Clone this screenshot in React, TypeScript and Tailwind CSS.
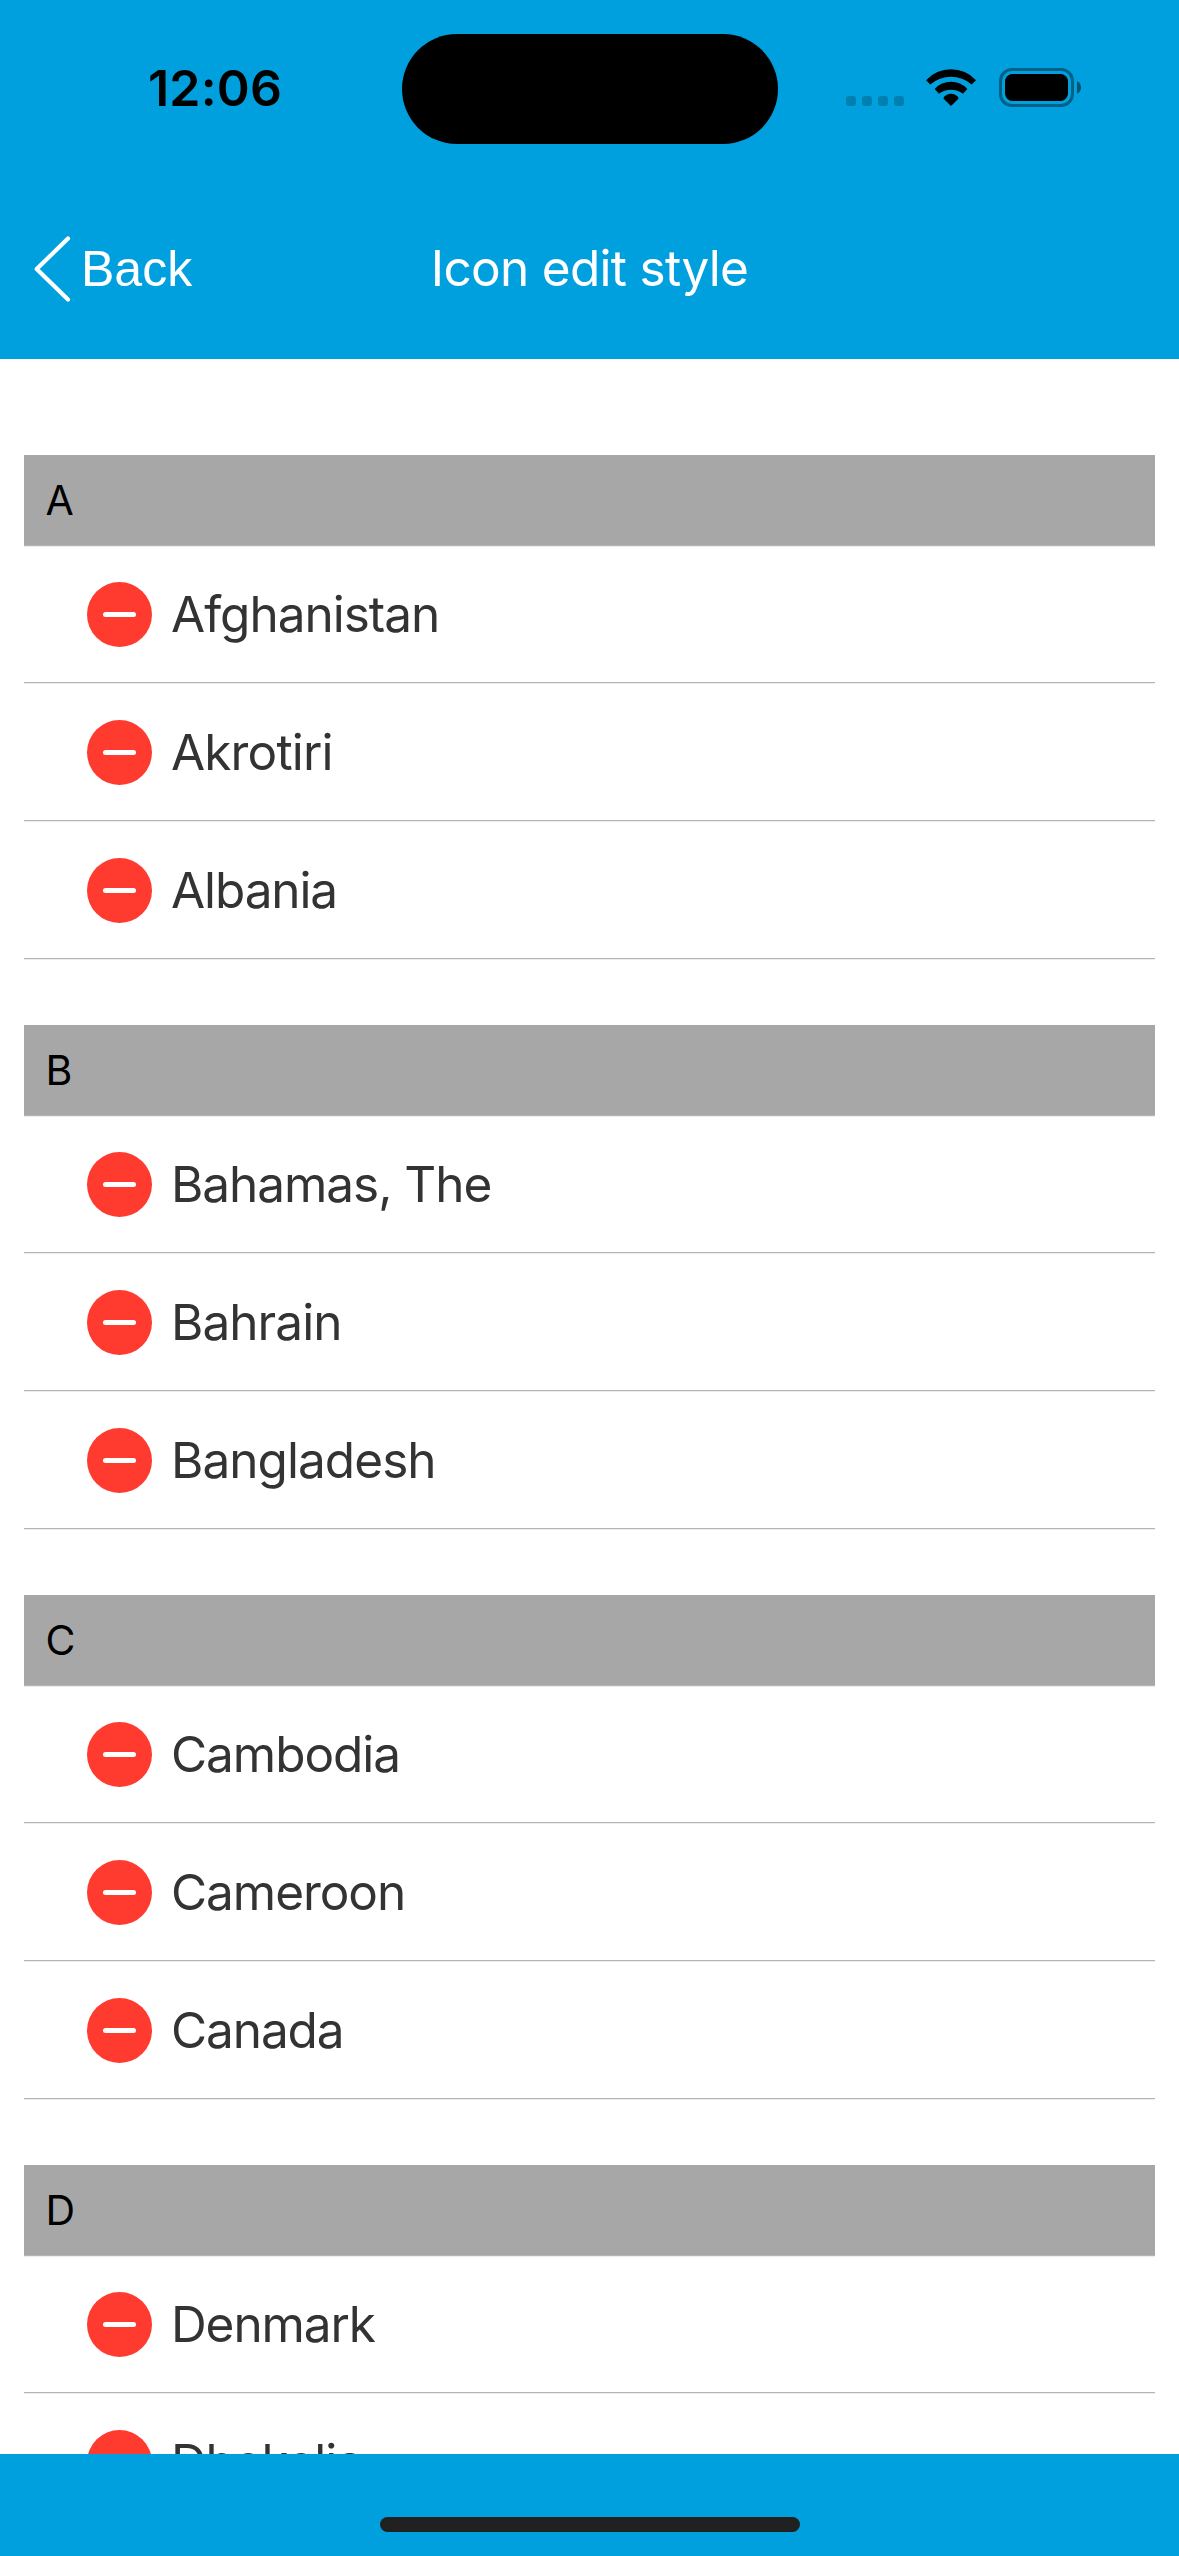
type Country = { name: string; tracking: string };
type Section = { letter: string; countries: Country[] };

const sections: Section[] = [
  {
    letter: "A",
    countries: [
      { name: "Afghanistan", tracking: "tracking-[-1px]" },
      { name: "Akrotiri", tracking: "tracking-[-0.85px]" },
      { name: "Albania", tracking: "tracking-[-1.1px]" },
    ],
  },
  {
    letter: "B",
    countries: [
      { name: "Bahamas, The", tracking: "tracking-[-1.05px]" },
      { name: "Bahrain", tracking: "tracking-[-0.95px]" },
      { name: "Bangladesh", tracking: "tracking-[-0.95px]" },
    ],
  },
  {
    letter: "C",
    countries: [
      { name: "Cambodia", tracking: "tracking-[-1.05px]" },
      { name: "Cameroon", tracking: "tracking-[-1.05px]" },
      { name: "Canada", tracking: "tracking-[-1.1px]" },
    ],
  },
  {
    letter: "D",
    countries: [
      { name: "Denmark", tracking: "tracking-[-1.1px]" },
      { name: "Dhekelia", tracking: "tracking-[-1.1px]" },
    ],
  },
];

function WifiIcon() {
  return (
    <svg className="h-[37px] w-[50px]" viewBox="0 0 150 111" aria-hidden="true">
      <path d="M0 33.5A101.7 101.7 0 0 1 150 33.5L137 46.5A95 95 0 0 0 13 46.5Z" />
      <path d="M26 60A65.6 65.6 0 0 1 124 60L111 74A60 60 0 0 0 39 74Z" />
      <path d="M52 88.5A26 26 0 0 1 98 88.5L75 111Z" />
    </svg>
  );
}

function BatteryIcon() {
  return (
    <svg className="h-[39px] w-[82px]" viewBox="0 0 82 39" aria-hidden="true">
      <rect x="1.5" y="1.5" width="72" height="36" rx="11.5" fill="none" stroke="black" strokeOpacity="0.4" strokeWidth="3" />
      <rect x="6" y="6" width="63" height="27" rx="7.5" />
      <path d="M78 13.3C80.5 14.4 82 16.7 82 19.5C82 22.3 80.5 24.6 78 25.7Z" fillOpacity="0.5" />
    </svg>
  );
}

function StatusBar() {
  return (
    <div className="flex h-[177px] text-black">
      <div className="w-[401.5px] pt-[58px] pl-[148px] text-[50px] leading-[60px] font-semibold tracking-[0.2px]">
        12:06
      </div>
      <div className="mt-[34px] h-[110px] w-[376px] rounded-full bg-black" />
      <div className="mt-[68px] ml-[68.5px] flex h-[39px] items-start">
        <div className="mt-[28px] flex gap-[6px]">
          {[0, 1, 2, 3].map((dot) => (
            <span key={dot} className="size-[10px] rounded-[3px] bg-black/20" />
          ))}
        </div>
        <div className="mt-px ml-[22px]">
          <WifiIcon />
        </div>
        <div className="ml-[23px]">
          <BatteryIcon />
        </div>
      </div>
    </div>
  );
}

function NavBar() {
  return (
    <div className="grid h-[182px] grid-cols-[1fr_auto_1fr] items-center text-white">
      <button className="flex items-center pl-[33.5px] text-left">
        <svg className="mt-[2px] h-[66px] w-[37px]" viewBox="0 0 37 66" fill="none" stroke="currentColor" strokeWidth="4.2" strokeLinecap="round" strokeLinejoin="round" aria-hidden="true">
          <path d="M34 2.5L2.7 33L34 63.5" />
        </svg>
        <span className="mt-px ml-[10.5px] font-['Liberation_Sans',Arial,sans-serif] text-[50px] leading-[60px]">
          Back
        </span>
      </button>
      <h1 className="text-[49.5px] leading-[60px] font-normal tracking-[-0.7px]">Icon edit style</h1>
      <div />
    </div>
  );
}

function RemoveButton() {
  return (
    <button className="flex size-[65px] shrink-0 items-center justify-center rounded-full bg-[#ff3b30]" aria-label="Remove">
      <span className="h-[5px] w-[33px] rounded-full bg-white" />
    </button>
  );
}

function CountryRow({ name, tracking }: Country) {
  return (
    <li className="h-[138px] border-b border-[#b4b4b4] pt-[37px] pl-[63px] shadow-[0_1px_0_#ededed] first:h-[137px] first:pt-[36px]">
      <div className="flex h-[65px] items-center gap-[19px] text-[49.5px] leading-[65px] text-[#333333]">
        <RemoveButton />
        <span className={tracking}>{name}</span>
      </div>
    </li>
  );
}

export default function App() {
  return (
    <div className="flex h-[2556px] w-[1179px] flex-col overflow-hidden bg-white font-[Inter,sans-serif]">
      <header className="shrink-0 bg-[#00a0de]">
        <StatusBar />
        <NavBar />
      </header>
      <main className="min-h-0 flex-1 overflow-hidden px-6 pt-24">
        {sections.map(({ letter, countries }) => (
          <section key={letter} className="mb-[66px]">
            <h2 className="h-[91px] border-b border-[#b4b4b4] bg-[#a7a7a7] pl-[21.5px] text-[41px] leading-[90px] font-normal text-black shadow-[0_1px_0_#ededed]">
              {letter}
            </h2>
            <ul>
              {countries.map((country) => (
                <CountryRow key={country.name} {...country} />
              ))}
            </ul>
          </section>
        ))}
      </main>
      <footer className="flex h-[102px] shrink-0 justify-center bg-[#00a0de] pt-[63px]">
        <div className="h-[15px] w-[420px] rounded-full bg-[#212121]" />
      </footer>
    </div>
  );
}
